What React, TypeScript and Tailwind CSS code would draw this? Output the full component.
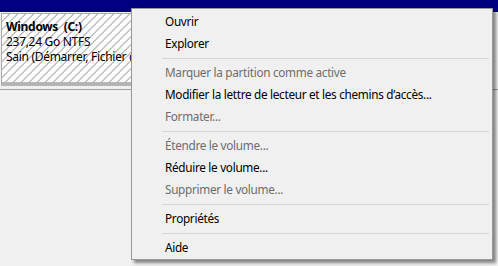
import React from 'react';

type Item = { label: string; disabled?: boolean } | 'sep';

const items: Item[] = [
  { label: 'Ouvrir' },
  { label: 'Explorer' },
  'sep',
  { label: 'Marquer la partition comme active', disabled: true },
  { label: 'Modifier la lettre de lecteur et les chemins d’accès...' },
  { label: 'Formater...', disabled: true },
  'sep',
  { label: 'Étendre le volume...', disabled: true },
  { label: 'Réduire le volume...' },
  { label: 'Supprimer le volume...', disabled: true },
  'sep',
  { label: 'Propriétés' },
  'sep',
  { label: 'Aide' },
];

export default function App() {
  return (
    <div className="relative w-[498px] h-[266px] overflow-hidden bg-[#f0f0f0] font-['Segoe_UI','Noto_Sans',sans-serif] text-[11.75px] tracking-[-0.3px] text-black">
      {/* header strip of the disk */}
      <div className="h-[12px] bg-[#000080]" />

      {/* partition block */}
      <div className="mt-[1px] ml-[1px] w-[160px] h-[73px] border border-[#a9a9a9] border-b-4 border-b-[#b4b4b4] bg-white bg-[repeating-linear-gradient(135deg,#ffffff_0px,#ffffff_4.6px,#c2c2c2_4.6px,#c2c2c2_5.66px)] pl-[4px] pt-[5px] leading-[15px] text-[12px]">
        <div className="font-bold">Windows&nbsp; (C:)</div>
        <div>237,24 Go NTFS</div>
        <div className="whitespace-nowrap">Sain (Démarrer, Fichier d’échange)</div>
      </div>
      <div className="mt-[3px] h-px bg-[#a0a0a0]" />

      {/* context menu */}
      <div className="absolute left-[131px] top-[8px] w-[362px] h-[252px] border border-[#979797] bg-[#f0f0f0] pt-[2px] shadow-[3px_3px_3px_rgba(0,0,0,0.45)]">
        {items.map((it, i) =>
          it === 'sep' ? (
            <div key={i} className="h-[7px] flex items-center pl-[30px] pr-[3px]">
              <div className="w-full h-px bg-[#d7d7d7]" />
            </div>
          ) : (
            <div
              key={i}
              className={`h-[22px] flex items-center pl-[33px] whitespace-nowrap ${it.disabled ? 'text-[#6d6d6d]' : 'text-black'}`}
            >
              {it.label}
            </div>
          )
        )}
      </div>
    </div>
  );
}
